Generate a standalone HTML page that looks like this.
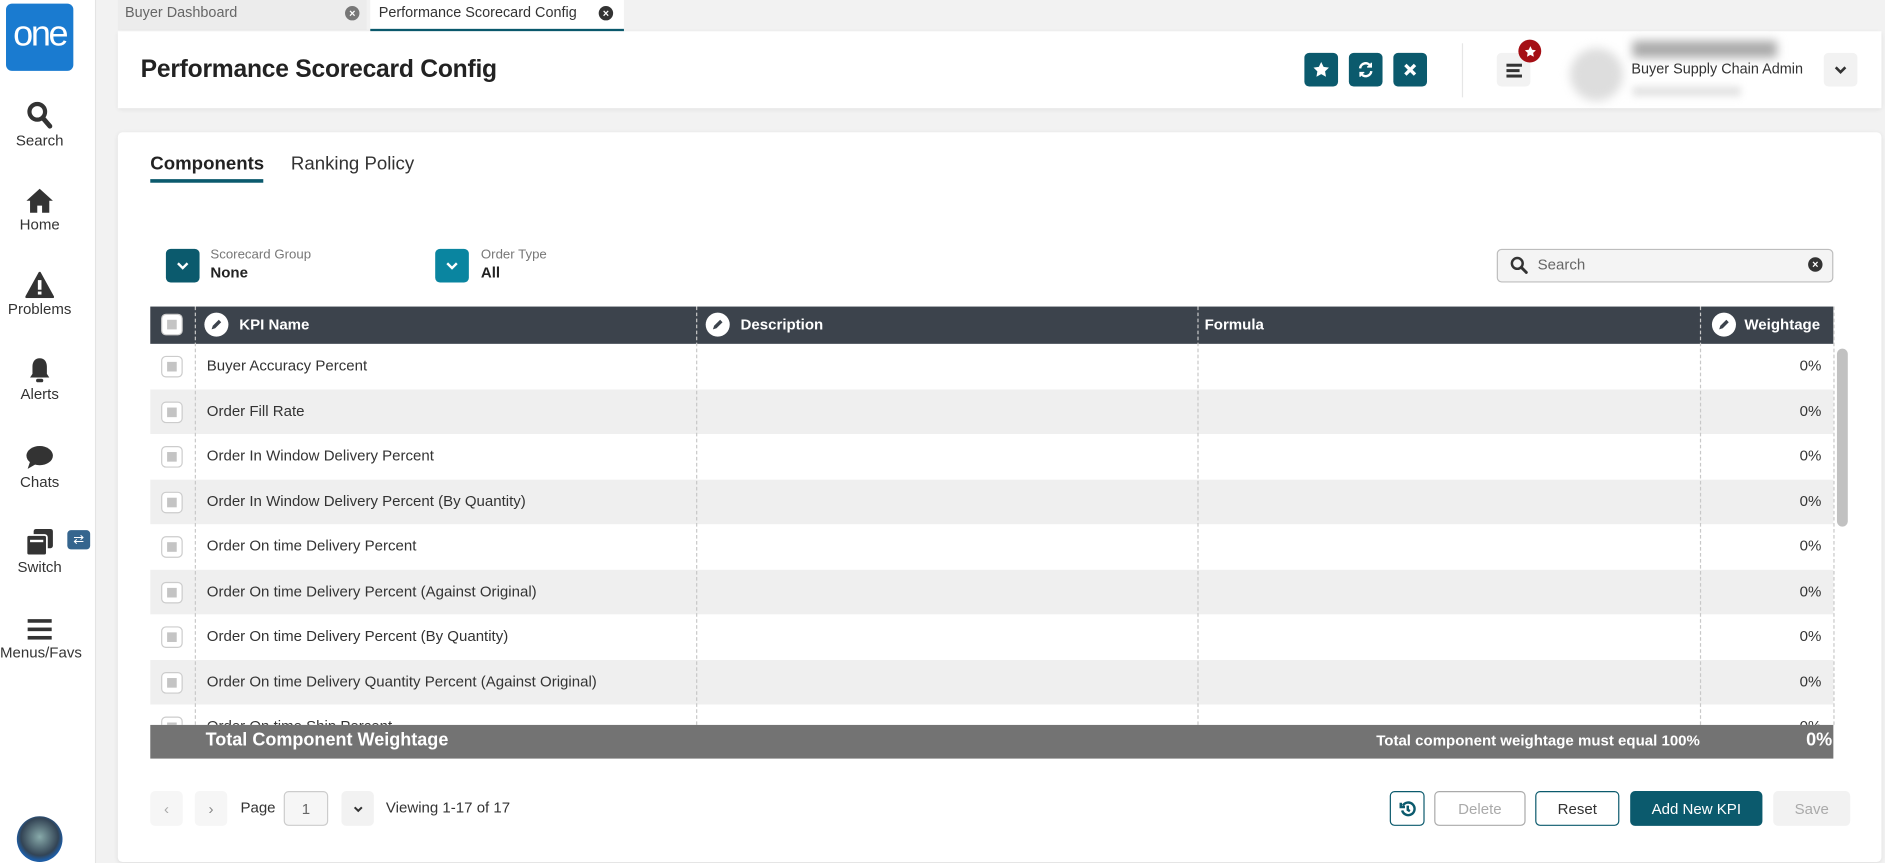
<!DOCTYPE html>
<html><head><meta charset="utf-8">
<style>
*{box-sizing:border-box;margin:0;padding:0}
html,body{width:1885px;height:863px;overflow:hidden;background:#f2f2f2;font-family:"Liberation Sans",sans-serif;color:#333}
#w{position:absolute;left:0;top:0;width:1568px;height:718px;transform:scale(1.2022);transform-origin:0 0;background:#f2f2f2}
.abs{position:absolute}
.side{left:0;top:0;width:80px;height:718px;background:#fff;border-right:1px solid #e4e4e4}
.nav{position:absolute;left:0;width:66px;text-align:center;font-size:12.5px;color:#333}
.nav svg{display:block;margin:0 auto 2px}
.teal{background:#0b5a6d}
.btn{position:absolute;border-radius:4px;font-size:12.5px;display:flex;align-items:center;justify-content:center}
.row{position:absolute;left:125px;width:1400px;height:37.5px;font-size:12.5px}
.row .t{position:absolute;left:47px;top:11px}
.row .p{position:absolute;right:10px;top:11px}
.cb{position:absolute;left:9px;top:10px;width:18px;height:18px;border:1px solid #ccc;border-radius:4px;background:#fff}
.cb:after{content:"";position:absolute;left:4px;top:4px;width:8px;height:8px;background:#c4c4c4}
.vl{position:absolute;top:255px;height:348px;border-left:1px dashed #c8c8c8}
.pen{position:absolute;top:260px;width:20px;height:20px;border-radius:50%;background:#fff}
.th{position:absolute;top:263px;color:#fff;font-weight:bold;font-size:12.5px}
</style></head><body><div id="w">
<div class="abs side"></div>
<div class="abs" style="left:5px;top:3px;width:56px;height:56px;background:#1a7bd0;border-radius:5px;color:#fff;font-size:30px;text-align:center;line-height:52px;letter-spacing:-2px">one</div>
<div class="nav" style="top:84px"><svg width="22" height="24" viewBox="0 0 22 24"><circle cx="9" cy="9" r="6.5" fill="none" stroke="#333" stroke-width="3.5"/><path d="M13.5 14l6 7" stroke="#333" stroke-width="4" stroke-linecap="round"/></svg>Search</div>
<div class="nav" style="top:156px"><svg width="24" height="22" viewBox="0 0 24 22"><path d="M12 1L1 11h3v10h6v-6h4v6h6V11h3z" fill="#333"/></svg>Home</div>
<div class="nav" style="top:226px"><svg width="24" height="22" viewBox="0 0 24 22"><path d="M12 1L1 21h22z" fill="#333" stroke="#333" stroke-linejoin="round" stroke-width="2"/><rect x="10.5" y="7" width="3" height="8" fill="#fff"/><rect x="10.5" y="16.5" width="3" height="2.5" fill="#fff"/></svg>Problems</div>
<div class="nav" style="top:297px"><svg width="20" height="22" viewBox="0 0 20 22"><path d="M10 1c-4 0-6 3-6 7v6l-2 3h16l-2-3V8c0-4-2-7-6-7z" fill="#333"/><rect x="7" y="18" width="6" height="3" rx="1.5" fill="#333"/></svg>Alerts</div>
<div class="nav" style="top:370px"><svg width="24" height="22" viewBox="0 0 24 22"><ellipse cx="12" cy="9" rx="11" ry="8" fill="#333"/><path d="M4 14l-2 6 7-4z" fill="#333"/></svg>Chats</div>
<div class="nav" style="top:439px"><svg width="24" height="24" viewBox="0 0 24 24"><rect x="7" y="1" width="16" height="16" rx="2" fill="#333"/><rect x="1" y="6" width="17" height="17" rx="2" fill="#333" stroke="#fff" stroke-width="1.5"/><rect x="4" y="10" width="11" height="2" fill="#fff"/></svg>Switch</div>
<div class="abs" style="left:56px;top:441px;width:19px;height:16px;background:#35658e;border-radius:3px;color:#fff;font-size:11px;text-align:center;line-height:16px">⇄</div>
<div class="nav" style="top:512px"><svg width="24" height="22" viewBox="0 0 24 22"><rect x="2" y="3" width="20" height="3" fill="#333"/><rect x="2" y="10" width="20" height="3" fill="#333"/><rect x="2" y="17" width="20" height="3" fill="#333"/></svg>Menus/Favs</div>
<div class="abs" style="left:14px;top:679px;width:38px;height:38px;border-radius:50%;background:radial-gradient(circle at 50% 45%,#8aa 0,#345 55%,#1d5ea8 70%,#1a3a5a 100%)"></div>

<div class="abs" style="left:98px;top:0;width:207px;height:25px;background:#ececec;font-size:12px;color:#666;padding:3px 6px">Buyer Dashboard</div>
<div class="abs" style="left:287px;top:5px;width:12px;height:12px;border-radius:50%;background:#777;color:#fff;font-size:9px;text-align:center;line-height:12px;font-weight:bold">×</div>
<div class="abs" style="left:308px;top:0;width:211px;height:26px;background:#fff;border-bottom:2px solid #0b5a6d;font-size:12px;color:#333;padding:3px 7px">Performance Scorecard Config</div>
<div class="abs" style="left:498px;top:5px;width:12px;height:12px;border-radius:50%;background:#333;color:#fff;font-size:9px;text-align:center;line-height:12px;font-weight:bold">×</div>

<div class="abs" style="left:98px;top:26px;width:1467px;height:64px;background:#fff;box-shadow:0 1px 4px rgba(0,0,0,.08)"></div>
<div class="abs" style="left:117px;top:46px;font-size:20.5px;font-weight:bold;color:#222;letter-spacing:-0.2px">Performance Scorecard Config</div>
<div class="btn teal" style="left:1085px;top:44px;width:28px;height:28px"><svg width="14" height="14" viewBox="0 0 24 24"><path d="M12 1l3.4 7 7.6 1-5.5 5.3 1.3 7.7L12 18.3 5.2 22l1.3-7.7L1 9l7.6-1z" fill="#fff"/></svg></div>
<div class="btn teal" style="left:1122px;top:44px;width:28px;height:28px"><svg width="14" height="14" viewBox="0 0 24 24" fill="none" stroke="#fff" stroke-width="3.5"><path d="M4 10a8 8 0 0 1 15-3M20 14a8 8 0 0 1-15 3"/><path d="M20 2v6h-6M4 22v-6h6" fill="#fff" stroke-width="2"/></svg></div>
<div class="btn teal" style="left:1159px;top:44px;width:28px;height:28px"><svg width="12" height="12" viewBox="0 0 12 12"><path d="M2 2l8 8M10 2l-8 8" stroke="#fff" stroke-width="2.8"/></svg></div>
<div class="abs" style="left:1216px;top:36px;width:1px;height:45px;background:#e6e6e6"></div>
<div class="btn" style="left:1245px;top:44px;width:28px;height:28px;background:#f2f2f2"><svg width="13" height="13" viewBox="0 0 13 13"><rect y="1" width="13" height="2.5" fill="#333"/><rect y="5.5" width="11" height="2.5" fill="#333"/><rect y="10" width="13" height="2.5" fill="#333"/></svg></div>
<div class="abs" style="left:1263px;top:33px;width:19px;height:19px;border-radius:50%;background:#a50f15;display:flex;align-items:center;justify-content:center"><svg width="10" height="10" viewBox="0 0 24 24"><path d="M12 1l3.4 7 7.6 1-5.5 5.3 1.3 7.7L12 18.3 5.2 22l1.3-7.7L1 9l7.6-1z" fill="#fff"/></svg></div>
<div class="abs" style="left:1306px;top:40px;width:44px;height:44px;border-radius:50%;background:#ddd;filter:blur(4px)"></div>
<div class="abs" style="left:1358px;top:34px;width:120px;height:14px;background:#aaa;filter:blur(4px)"></div>
<div class="abs" style="left:1357px;top:50px;font-size:12px;color:#333">Buyer Supply Chain Admin</div>
<div class="abs" style="left:1358px;top:72px;width:90px;height:8px;background:#e2e2e2;filter:blur(3px)"></div>
<div class="btn" style="left:1517px;top:44px;width:28px;height:28px;background:#f2f2f2"><svg width="10" height="8" viewBox="0 0 10 8"><path d="M1 2l4 4 4-4" stroke="#333" stroke-width="2.2" fill="none"/></svg></div>

<div class="abs" style="left:98px;top:110px;width:1467px;height:607px;background:#fff;border-radius:4px;box-shadow:0 1px 4px rgba(0,0,0,.08)"></div>
<div class="abs" style="left:125px;top:128px;font-size:15.5px;font-weight:bold;color:#222">Components</div>
<div class="abs" style="left:125px;top:149px;width:94px;height:3px;background:#0b5a6d"></div>
<div class="abs" style="left:242px;top:128px;font-size:15.5px;color:#333">Ranking Policy</div>

<div class="btn teal" style="left:138px;top:207px;width:28px;height:28px"><svg width="10" height="8" viewBox="0 0 10 8"><path d="M1 2l4 4 4-4" stroke="#fff" stroke-width="2" fill="none"/></svg></div>
<div class="abs" style="left:175px;top:206px;font-size:11px;color:#777">Scorecard Group</div>
<div class="abs" style="left:175px;top:220px;font-size:12.5px;font-weight:bold;color:#222">None</div>
<div class="btn" style="left:362px;top:207px;width:28px;height:28px;background:#0a85a0"><svg width="10" height="8" viewBox="0 0 10 8"><path d="M1 2l4 4 4-4" stroke="#fff" stroke-width="2" fill="none"/></svg></div>
<div class="abs" style="left:400px;top:206px;font-size:11px;color:#777">Order Type</div>
<div class="abs" style="left:400px;top:220px;font-size:12.5px;font-weight:bold;color:#222">All</div>

<div class="abs" style="left:1245px;top:207px;width:280px;height:28px;background:#f4f4f4;border:1px solid #bdbdbd;border-radius:4px"></div>
<svg class="abs" style="left:1256px;top:213px" width="15" height="15" viewBox="0 0 16 16"><circle cx="6.5" cy="6.5" r="4.8" fill="none" stroke="#333" stroke-width="2.2"/><path d="M10 10l4.5 4.5" stroke="#333" stroke-width="2.6" stroke-linecap="round"/></svg>
<div class="abs" style="left:1279px;top:213px;font-size:12.5px;color:#666">Search</div>
<div class="abs" style="left:1504px;top:214px;width:12px;height:12px;border-radius:50%;background:#333;color:#fff;font-size:9px;text-align:center;line-height:12px;font-weight:bold">×</div>

<div class="abs" style="left:125px;top:255px;width:1400px;height:31px;background:#3c434c"></div>
<div class="cb" style="left:134px;top:261px"></div>
<div class="abs" style="left:125px;top:323.5px;width:1400px;height:37.5px;background:#efefef"></div>
<div class="abs" style="left:125px;top:398.5px;width:1400px;height:37.5px;background:#efefef"></div>
<div class="abs" style="left:125px;top:473.5px;width:1400px;height:37.5px;background:#efefef"></div>
<div class="abs" style="left:125px;top:548.5px;width:1400px;height:37.5px;background:#efefef"></div>
<div class="vl" style="left:162px"></div><div class="vl" style="left:579px"></div><div class="vl" style="left:996px"></div><div class="vl" style="left:1414px"></div><div class="vl" style="left:1525px"></div>
<div class="pen" style="left:170px"></div><div class="pen" style="left:587px"></div><div class="pen" style="left:1424px"></div>
<svg class="abs" style="left:175px;top:265px" width="10" height="10" viewBox="0 0 10 10"><path d="M1 9l1-3 5-5 2 2-5 5z" fill="#3c434c"/></svg>
<svg class="abs" style="left:592px;top:265px" width="10" height="10" viewBox="0 0 10 10"><path d="M1 9l1-3 5-5 2 2-5 5z" fill="#3c434c"/></svg>
<svg class="abs" style="left:1429px;top:265px" width="10" height="10" viewBox="0 0 10 10"><path d="M1 9l1-3 5-5 2 2-5 5z" fill="#3c434c"/></svg>
<div class="th" style="left:199px">KPI Name</div>
<div class="th" style="left:616px">Description</div>
<div class="th" style="left:1002px">Formula</div>
<div class="th" style="left:1451px">Weightage</div>

<div class="row" style="top:286px"><div class="cb"></div><div class="t">Buyer Accuracy Percent</div><div class="p">0%</div></div>
<div class="row" style="top:323.5px"><div class="cb"></div><div class="t">Order Fill Rate</div><div class="p">0%</div></div>
<div class="row" style="top:361px"><div class="cb"></div><div class="t">Order In Window Delivery Percent</div><div class="p">0%</div></div>
<div class="row" style="top:398.5px"><div class="cb"></div><div class="t">Order In Window Delivery Percent (By Quantity)</div><div class="p">0%</div></div>
<div class="row" style="top:436px"><div class="cb"></div><div class="t">Order On time Delivery Percent</div><div class="p">0%</div></div>
<div class="row" style="top:473.5px"><div class="cb"></div><div class="t">Order On time Delivery Percent (Against Original)</div><div class="p">0%</div></div>
<div class="row" style="top:511px"><div class="cb"></div><div class="t">Order On time Delivery Percent (By Quantity)</div><div class="p">0%</div></div>
<div class="row" style="top:548.5px"><div class="cb"></div><div class="t">Order On time Delivery Quantity Percent (Against Original)</div><div class="p">0%</div></div>
<div class="row" style="top:586px;height:17px;overflow:hidden"><div class="cb"></div><div class="t">Order On time Ship Percent</div><div class="p">0%</div></div>
<div class="abs" style="left:1528px;top:290px;width:9px;height:148px;background:#c1c1c1;border-radius:5px"></div>

<div class="abs" style="left:125px;top:603px;width:1400px;height:28px;background:#737373"></div>
<div class="abs" style="left:171px;top:607px;font-size:15px;font-weight:bold;color:#fff">Total Component Weightage</div>
<div class="abs" style="right:154px;top:609px;font-size:12.5px;font-weight:bold;color:#fff">Total component weightage must equal 100%</div>
<div class="abs" style="right:44px;top:607px;font-size:15px;font-weight:bold;color:#fff">0%</div>

<div class="btn" style="left:125px;top:658px;width:27px;height:29px;background:#f6f6f6;color:#aaa">‹</div>
<div class="btn" style="left:162px;top:658px;width:27px;height:29px;background:#f6f6f6;color:#888">›</div>
<div class="abs" style="left:200px;top:665px;font-size:12.5px">Page</div>
<div class="btn" style="left:236px;top:658px;width:37px;height:29px;border:1px solid #ccc;background:#f6f6f6;color:#666">1</div>
<div class="btn" style="left:284px;top:658px;width:27px;height:29px;background:#f2f2f2"><svg width="8" height="6" viewBox="0 0 10 8"><path d="M1 2l4 4 4-4" stroke="#333" stroke-width="2.2" fill="none"/></svg></div>
<div class="abs" style="left:321px;top:665px;font-size:12.5px">Viewing 1-17 of 17</div>

<div class="btn" style="left:1156px;top:658px;width:29px;height:29px;border:1px solid #0b5a6d"><svg width="14" height="14" viewBox="0 0 24 24" fill="none" stroke="#0b5a6d" stroke-width="3.5"><path d="M5 7a9 9 0 1 1-1 7"/><path d="M2 3v6h6" /><path d="M12 7v6l3 2"/></svg></div>
<div class="btn" style="left:1193px;top:658px;width:76px;height:29px;border:1px solid #aaa;color:#aaa">Delete</div>
<div class="btn" style="left:1277px;top:658px;width:70px;height:29px;border:1px solid #0b5a6d;color:#333">Reset</div>
<div class="btn teal" style="left:1356px;top:658px;width:110px;height:29px;color:#fff">Add New KPI</div>
<div class="btn" style="left:1475px;top:658px;width:64px;height:29px;background:#f2f2f2;color:#aaa">Save</div>
</div></body></html>
